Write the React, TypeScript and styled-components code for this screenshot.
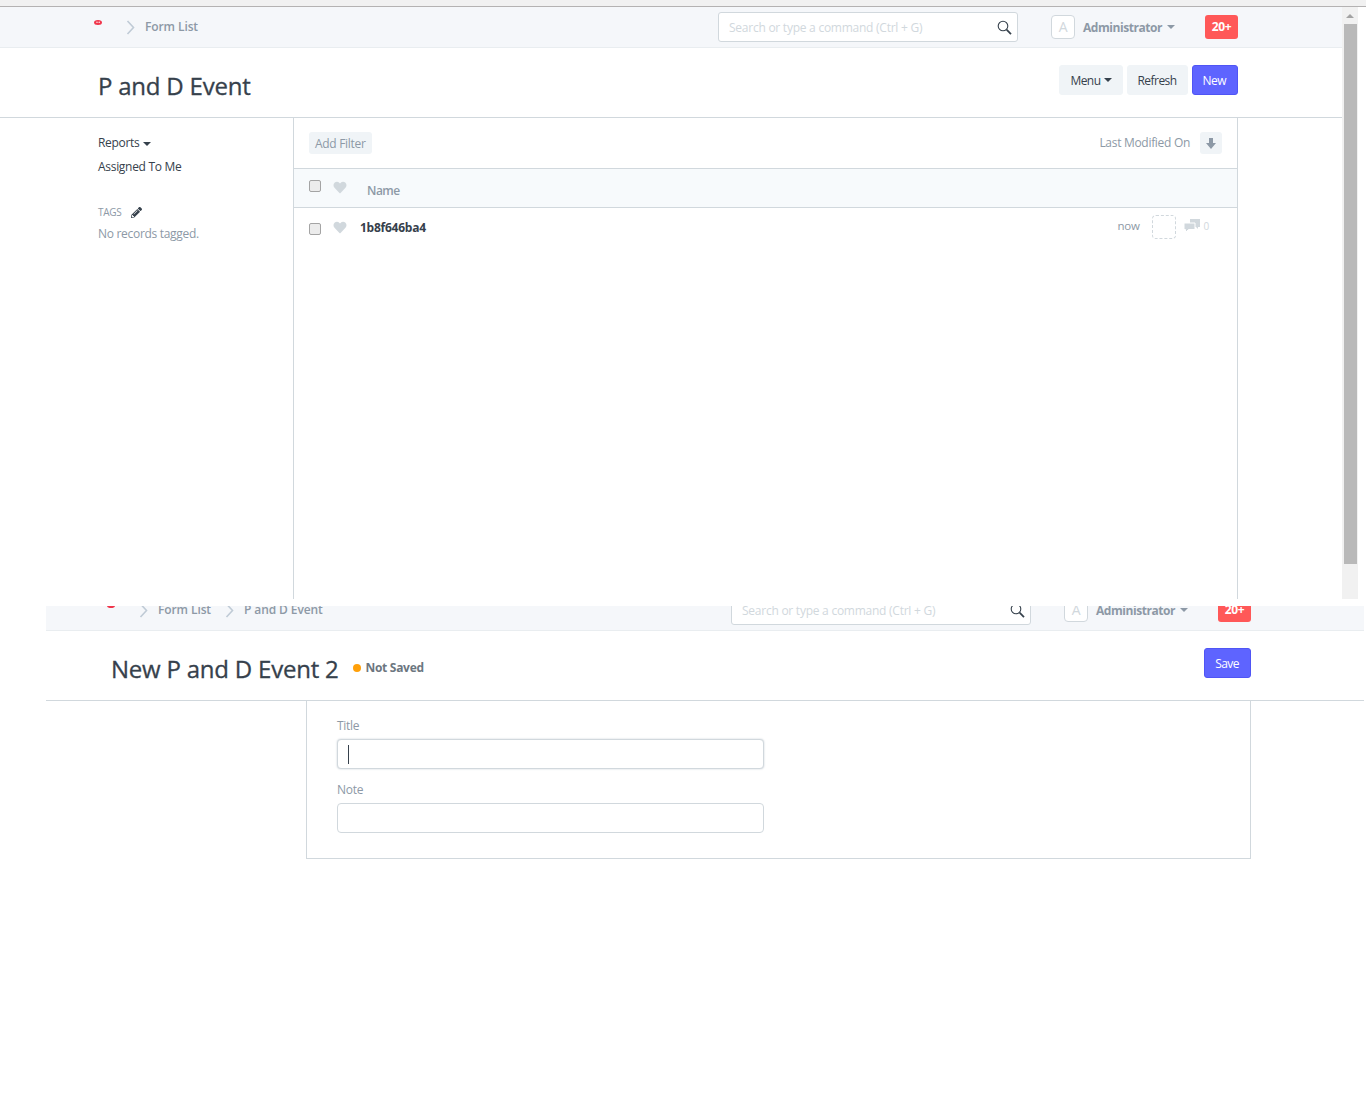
import React from 'react';
import styled, { createGlobalStyle } from 'styled-components';
import { FaHeart, FaPencilAlt } from 'react-icons/fa';

const GlobalStyle = createGlobalStyle`
  html, body {
    margin: 0;
    height: 1112px;
    overflow: hidden;
    background: #fff;
    font-family: "Open Sans", "Noto Sans", sans-serif;
    font-size: 12px;
    letter-spacing: -0.3px;
    color: #36414c;
  }
`;

const BrowserEdge = styled.div`
  height: 6px;
  background: #f1f1f1;
  border-bottom: 1px solid #b4b2b2;
`;

const TopWindow = styled.div`
  display: flex;
  width: 1358px;
  height: 592px;
  overflow: hidden;
`;

const BottomWindow = styled.div`
  width: 1318px;
  margin: 7px 0 0 46px;
  overflow: hidden;
`;

const Viewport = styled.div`
  flex: 1;
  min-width: 0;
`;

const ScrollTrack = styled.div`
  width: 16px;
  background: #f1f1f1;
  padding-top: 17px;
  box-sizing: border-box;
  position: relative;
`;

const ScrollArrow = styled.div`
  position: absolute;
  top: 7px;
  left: 4px;
  border-left: 4px solid transparent;
  border-right: 4px solid transparent;
  border-bottom: 4px solid #a3a3a3;
`;

const ScrollThumb = styled.div`
  width: 13px;
  height: 540px;
  margin-left: 2px;
  background: #b9b9b9;
`;

const NavBar = styled.div<{ $clipped?: boolean }>`
  height: 40px;
  background: #f5f7fa;
  border-bottom: 1px solid #e9edf0;
  margin-top: ${(p) => (p.$clipped ? '-16px' : '0')};
`;

const Container = styled.div<{ $left: number }>`
  width: 1140px;
  margin-left: ${(p) => p.$left}px;
  display: flex;
`;

const NavInner = styled(Container)`
  height: 40px;
  align-items: center;
`;

const Logo = styled.svg`
  width: 8px;
  height: 5px;
  margin: -9px 0 0 -4px;
  flex: none;
`;

const Crumb = styled.span`
  display: flex;
  align-items: center;
  gap: 10px;
  margin-left: 24px;
  font-weight: 600;
  letter-spacing: -0.1px;
  line-height: 14px;
  margin-top: -1px;
  color: #8d99a6;
  svg {
    flex: none;
    margin-top: 1px;
  }
  & + & {
    margin-left: 14px;
  }
`;

const SearchBox = styled.div`
  width: 300px;
  height: 30px;
  box-sizing: border-box;
  margin-left: auto;
  padding: 0 5px 0 10px;
  background: #fff;
  border: 1px solid #d1d8dd;
  border-radius: 3px;
  display: flex;
  align-items: center;
  justify-content: space-between;
  letter-spacing: -0.25px;
  color: #d1d8dd;
`;

const Avatar = styled.div`
  width: 24px;
  height: 24px;
  box-sizing: border-box;
  margin-left: 33px;
  background: #fff;
  border: 1px solid #d1d8dd;
  border-radius: 4px;
  font-size: 14px;
  line-height: 22px;
  text-align: center;
  color: #d1d8dd;
`;

const UserName = styled.span`
  margin-left: 8px;
  font-weight: 700;
  letter-spacing: -0.45px;
  color: #8d99a6;
`;

const Caret = styled.i<{ $color?: string; $gap?: number }>`
  display: inline-block;
  margin-left: ${(p) => p.$gap ?? 5}px;
  border-left: 4px solid transparent;
  border-right: 4px solid transparent;
  border-top: 4px solid ${(p) => p.$color ?? '#36414c'};
`;

const Badge = styled.div`
  width: 33px;
  height: 24px;
  margin-left: 30px;
  background: #ff5858;
  border-radius: 3px;
  color: #fff;
  font-weight: 700;
  line-height: 24px;
  text-align: center;
`;

const PageHead = styled.div`
  height: 69px;
  border-bottom: 1px solid #d1d8dd;
`;

const HeadInner = styled(Container)`
  height: 69px;
  align-items: flex-start;
`;

const Title = styled.h1`
  margin: 23px 0 0;
  font-size: 24px;
  font-weight: 500;
  line-height: 30px;
  letter-spacing: -0.22px;
  -webkit-text-stroke: 0.3px #36414c;
  color: #36414c;
`;

const Indicator = styled.span`
  display: flex;
  align-items: center;
  gap: 5px;
  margin: 28px 0 0 14px;
  font-weight: 700;
  color: #6c7680;
  &::before {
    content: '';
    width: 8px;
    height: 8px;
    border-radius: 50%;
    background: #ffa00a;
  }
`;

const Actions = styled.div`
  display: flex;
  gap: 4px;
  margin: 17px 0 0 auto;
`;

const Button = styled.div<{ $primary?: boolean }>`
  height: 30px;
  box-sizing: border-box;
  padding: 0 ${(p) => (p.$primary ? '11px' : '10px')} 0 10px;
  display: flex;
  align-items: center;
  border-radius: 3px;
  letter-spacing: -0.55px;
  border: 1px solid ${(p) => (p.$primary ? '#4f55f5' : '#f0f4f7')};
  background: ${(p) => (p.$primary ? '#5e64ff' : '#f0f4f7')};
  color: ${(p) => (p.$primary ? '#fff' : '#36414c')};
`;

const Sidebar = styled.div`
  width: 195px;
  flex: none;
  padding-top: 17px;
`;

const SideLink = styled.div`
  height: 24px;
  line-height: 16px;
  display: flex;
  align-items: flex-start;
  i {
    margin-top: 7px;
  }
`;

const TagsLabel = styled.div`
  margin-top: 23px;
  display: flex;
  align-items: center;
  gap: 10px;
  height: 12px;
  font-size: 10px;
  color: #8d99a6;
  svg {
    color: #36414c;
  }
`;

const NoTags = styled.div`
  margin-top: 8px;
  line-height: 16px;
  color: #8d99a6;
`;

const Panel = styled.div<{ $closed?: boolean }>`
  width: 945px;
  box-sizing: border-box;
  border-left: 1px solid #d1d8dd;
  border-right: 1px solid #d1d8dd;
  border-bottom: ${(p) => (p.$closed ? '1px solid #d1d8dd' : '0')};
  min-height: ${(p) => (p.$closed ? '158px' : '481px')};
`;

const FilterRow = styled.div`
  height: 51px;
  box-sizing: border-box;
  padding: 14px 15px 0;
  border-bottom: 1px solid #d1d8dd;
  display: flex;
  color: #8d99a6;
`;

const Chip = styled.div`
  height: 22px;
  padding: 0 6px;
  background: #f0f4f7;
  border-radius: 3px;
  line-height: 23px;
  color: #8d99a6;
`;

const SortLabel = styled.span`
  margin-left: auto;
  line-height: 22px;
`;

const SortButton = styled.div`
  width: 22px;
  height: 22px;
  margin-left: 10px;
  background: #f0f4f7;
  border-radius: 3px;
  display: flex;
  align-items: center;
  justify-content: center;
`;

const Check = styled.input.attrs({ type: 'checkbox', readOnly: true })<{ $low?: boolean }>`
  appearance: none;
  flex: none;
  width: 12px;
  height: 12px;
  margin: ${(p) => (p.$low ? '3px' : '0')} 0 0;
  background: #ececec;
  border: 1px solid #a4a4a4;
  border-radius: 2px;
`;

const HeaderRow = styled.div`
  height: 39px;
  box-sizing: border-box;
  padding: 0 15px 4px;
  background: #f7fafc;
  border-bottom: 1px solid #d1d8dd;
  display: flex;
  align-items: center;
`;

const HeartIcon = styled(FaHeart)<{ $drop?: number }>`
  flex: none;
  width: 14px;
  height: 13px;
  margin: ${(p) => p.$drop ?? 0}px 0 0 12px;
  color: #d1d8dd;
`;

const NameHead = styled.span`
  margin: 8px 0 0 20px;
  font-weight: 600;
  letter-spacing: -0.5px;
  color: #8d99a6;
`;

const ListRow = styled.div`
  height: 38px;
  box-sizing: border-box;
  padding: 0 28px 0 15px;
  display: flex;
  align-items: center;
`;

const RowName = styled.span`
  margin-left: 13px;
  font-weight: 700;
  letter-spacing: -0.25px;
`;

const RowTime = styled.span`
  margin: -3px 0 0 auto;
  color: #8d99a6;
  font-size: 11.5px;
`;

const EmptyAvatar = styled.div`
  width: 24px;
  height: 24px;
  box-sizing: border-box;
  margin: 0 8px 0 12px;
  border: 1px dashed #d1d8dd;
  border-radius: 4px;
`;

const CommentIcon = styled.svg`
  width: 16px;
  height: 14px;
  margin-top: -3px;
  color: #d1d8dd;
`;

const CommentCount = styled.span`
  margin: -2px 0 0 4px;
  font-size: 10px;
  color: #d1d8dd;
`;

const FormArea = styled.div`
  padding: 17px 30px 0;
`;

const FieldLabel = styled.div`
  height: 16px;
  line-height: 16px;
  color: #8d99a6;
`;

const FieldBox = styled.div<{ $focused?: boolean }>`
  width: 427px;
  height: 30px;
  box-sizing: border-box;
  margin: 5px 0 13px;
  padding: 5px 10px;
  background: #fff;
  border: 1px solid #d1d8dd;
  border-radius: 4px;
  box-shadow: ${(p) => (p.$focused ? '0 0 2px #c4ccd3' : 'none')};
`;

const TextCaret = styled.div`
  width: 1px;
  height: 19px;
  background: #36414c;
`;

const Chevron = () => (
  <svg width="9" height="15" viewBox="0 0 9 15" fill="none">
    <path d="M1.5 1l6 6.5-6 6.5" stroke="#c0cbd6" strokeWidth="1.6" />
  </svg>
);

const SearchGlyph = () => (
  <svg width="15" height="15" viewBox="0 0 15 15" fill="none" stroke="#36414c">
    <circle cx="6" cy="6" r="4.8" strokeWidth="1.1" />
    <path d="M9.6 9.6l4.4 4.6" strokeWidth="1.7" />
  </svg>
);

const SortArrow = () => (
  <svg width="10" height="11" viewBox="0 0 10 11">
    <path d="M3 0h4v5h3l-5 6-5-6h3z" fill="#8d99a6" />
  </svg>
);

const Nav = ({ left, clipped, crumbs }: { left: number; clipped?: boolean; crumbs: string[] }) => (
  <NavBar $clipped={clipped}>
    <NavInner $left={left}>
      <Logo viewBox="0 0 8 5">
        <ellipse cx="4" cy="2.5" rx="4" ry="2.5" fill="#f0364b" />
        <circle cx="3" cy="2.3" r="0.7" fill="#fff" />
        <circle cx="5.2" cy="2.3" r="0.7" fill="#fff" />
      </Logo>
      {crumbs.map((c) => (
        <Crumb key={c}>
          <Chevron />
          {c}
        </Crumb>
      ))}
      <SearchBox>
        Search or type a command (Ctrl + G)
        <SearchGlyph />
      </SearchBox>
      <Avatar>A</Avatar>
      <UserName>Administrator</UserName>
      <Caret $color="#8d99a6" />
      <Badge>20+</Badge>
    </NavInner>
  </NavBar>
);

const App = () => (
  <>
    <GlobalStyle />
    <BrowserEdge />
    <TopWindow>
      <Viewport>
        <Nav left={98} crumbs={['Form List']} />
        <PageHead>
          <HeadInner $left={98}>
            <Title>P and D Event</Title>
            <Actions>
              <Button>
                Menu
                <Caret $gap={3} />
              </Button>
              <Button>Refresh</Button>
              <Button $primary>New</Button>
            </Actions>
          </HeadInner>
        </PageHead>
        <Container $left={98}>
          <Sidebar>
            <SideLink>
              Reports
              <Caret $gap={3} />
            </SideLink>
            <SideLink>Assigned To Me</SideLink>
            <TagsLabel>
              TAGS
              <FaPencilAlt size={11} />
            </TagsLabel>
            <NoTags>No records tagged.</NoTags>
          </Sidebar>
          <Panel>
            <FilterRow>
              <Chip>Add Filter</Chip>
              <SortLabel>Last Modified On</SortLabel>
              <SortButton>
                <SortArrow />
              </SortButton>
            </FilterRow>
            <HeaderRow>
              <Check />
              <HeartIcon $drop={3} />
              <NameHead>Name</NameHead>
            </HeaderRow>
            <ListRow>
              <Check $low />
              <HeartIcon />
              <RowName>1b8f646ba4</RowName>
              <RowTime>now</RowTime>
              <EmptyAvatar />
              <CommentIcon viewBox="0 0 16 14">
                <path d="M6 0h10v8h-2v2l-2-2H6z" fill="currentColor" />
                <path d="M0 4h11v6.500H4.500L1.500 13.500v-3H0z" fill="currentColor" stroke="#fff" strokeWidth="1" />
              </CommentIcon>
              <CommentCount>0</CommentCount>
            </ListRow>
          </Panel>
        </Container>
      </Viewport>
      <ScrollTrack>
        <ScrollArrow />
        <ScrollThumb />
      </ScrollTrack>
    </TopWindow>
    <BottomWindow>
      <Nav left={65} clipped crumbs={['Form List', 'P and D Event']} />
      <PageHead>
        <HeadInner $left={65}>
          <Title>New P and D Event 2</Title>
          <Indicator>Not Saved</Indicator>
          <Actions>
            <Button $primary>Save</Button>
          </Actions>
        </HeadInner>
      </PageHead>
      <Container $left={65}>
        <Sidebar />
        <Panel $closed>
          <FormArea>
            <FieldLabel>Title</FieldLabel>
            <FieldBox $focused>
              <TextCaret />
            </FieldBox>
            <FieldLabel>Note</FieldLabel>
            <FieldBox />
          </FormArea>
        </Panel>
      </Container>
    </BottomWindow>
  </>
);

export default App;
